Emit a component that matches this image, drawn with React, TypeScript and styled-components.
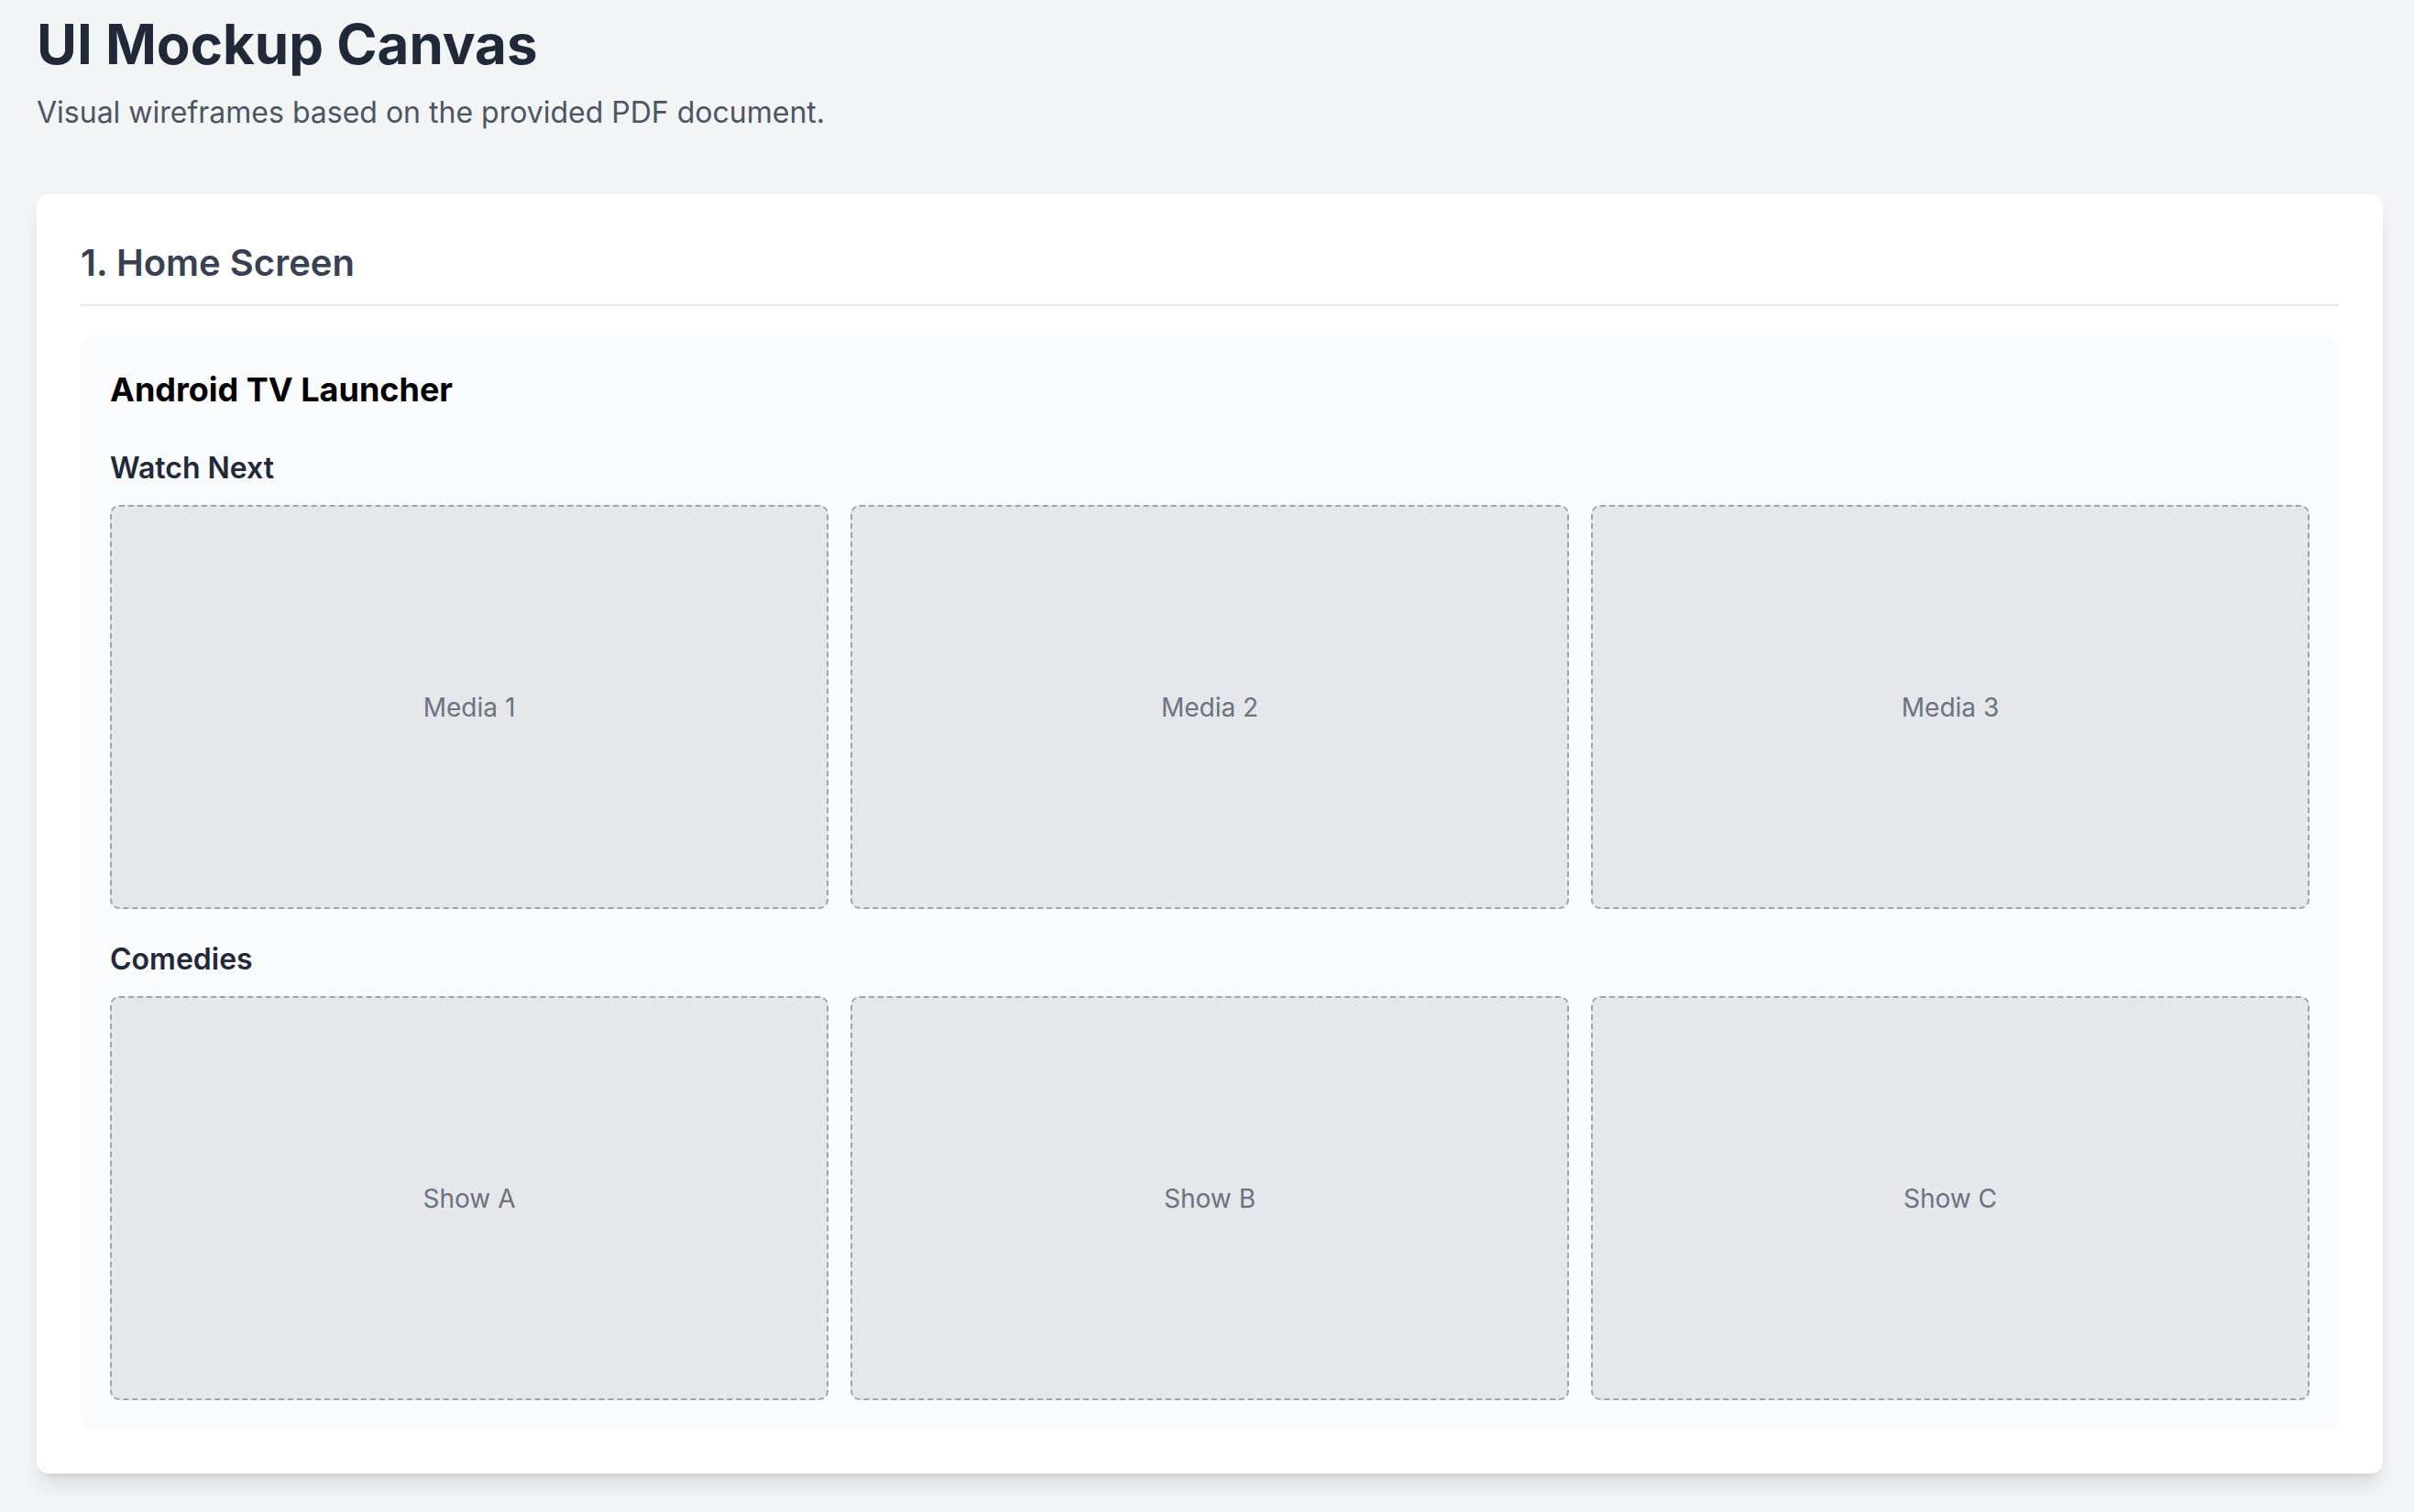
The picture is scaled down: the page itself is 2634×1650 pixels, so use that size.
import React from "react";
import styled, { createGlobalStyle } from "styled-components";

const GlobalStyle = createGlobalStyle`
  html, body {
    margin: 0;
    padding: 0;
    background: #f3f4f6;
    font-family: Inter, "Noto Sans", "Liberation Sans", sans-serif;
  }
  * { box-sizing: border-box; }
`;

const Page = styled.main`
  padding: 15px 34px 40px 40px;
  min-height: 100vh;
  background: #f3f4f6;
`;

const Title = styled.h1`
  margin: 0;
  font-size: 60px;
  line-height: 67px;
  font-weight: 700;
  color: #1f2937;
`;

const Subtitle = styled.p`
  margin: 17px 0 0;
  font-size: 32px;
  line-height: 47px;
  color: #4b5563;
`;

const Card = styled.section`
  margin-top: 66px;
  padding: 48px;
  background: #ffffff;
  border-radius: 13px;
  box-shadow: 0 17px 25px -5px rgba(0, 0, 0, 0.1), 0 7px 10px -6px rgba(0, 0, 0, 0.1);
`;

const SectionTitle = styled.h2`
  margin: 0 0 32px;
  padding-bottom: 18px;
  border-bottom: 2px solid #e5e7eb;
  font-size: 40px;
  line-height: 54px;
  font-weight: 600;
  color: #374151;
`;

const Panel = styled.div`
  background: #f9fafb;
  border-radius: 13px;
  padding: 36px 32px 32px;
`;

const PanelTitle = styled.h3`
  margin: 0;
  font-size: 36px;
  line-height: 47px;
  font-weight: 700;
  color: #000000;
`;

const Groups = styled.div`
  margin-top: 38px;
  display: flex;
  flex-direction: column;
  gap: 31px;
`;

const Group = styled.div`
  display: flex;
  flex-direction: column;
`;

const GroupTitle = styled.h4`
  margin: 0 0 17px;
  font-size: 32px;
  line-height: 47px;
  font-weight: 600;
  color: #1f2937;
`;

const TileGrid = styled.div`
  display: grid;
  grid-template-columns: repeat(3, 1fr);
  gap: 24px;
`;

const Tile = styled.div`
  aspect-ratio: 16 / 9;
  background: #e5e7eb;
  border: 2px dashed #9ca3af;
  border-radius: 10px;
  display: flex;
  align-items: center;
  justify-content: center;
  font-size: 28px;
  color: #6b7280;
`;

const groups = [
  { title: "Watch Next", items: ["Media 1", "Media 2", "Media 3"] },
  { title: "Comedies", items: ["Show A", "Show B", "Show C"] },
];

export default function App() {
  return (
    <>
      <GlobalStyle />
      <Page>
        <Title>UI Mockup Canvas</Title>
        <Subtitle>Visual wireframes based on the provided PDF document.</Subtitle>
        <Card>
          <SectionTitle>1. Home Screen</SectionTitle>
          <Panel>
            <PanelTitle>Android TV Launcher</PanelTitle>
            <Groups>
              {groups.map((g) => (
                <Group key={g.title}>
                  <GroupTitle>{g.title}</GroupTitle>
                  <TileGrid>
                    {g.items.map((item) => (
                      <Tile key={item}>{item}</Tile>
                    ))}
                  </TileGrid>
                </Group>
              ))}
            </Groups>
          </Panel>
        </Card>
      </Page>
    </>
  );
}
